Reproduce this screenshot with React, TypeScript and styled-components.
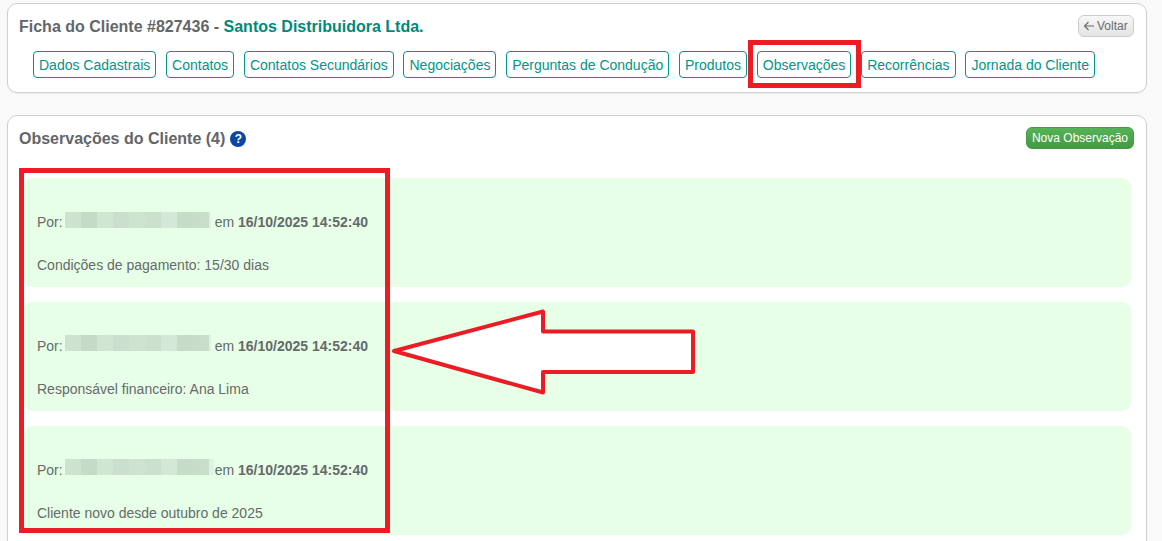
import React from "react";
import styled, { createGlobalStyle } from "styled-components";

const Global = createGlobalStyle`
  html, body { margin: 0; padding: 0; height: 541px; overflow: hidden; background: #f9f9f9; }
  body { font-family: "Liberation Sans", Arial, sans-serif; color: #666a6e; }
  #root { position: relative; }
`;

const Page = styled.div`
  position: relative;
  display: flex;
  flex-direction: column;
  gap: 22px;
  padding: 3px 15px 0 7px;
  height: 538px;
  overflow: hidden;
`;

const Card = styled.section`
  background: #fff;
  border: 1px solid #cfcfcf;
  border-radius: 10px;
  box-shadow: 0 1px 1px rgba(0, 0, 0, 0.04);
`;

const HeaderCard = styled(Card)`
  flex: none;
  padding: 11px 12px 0 11px;
  box-sizing: border-box;
  height: 90px;
`;

const ContentCard = styled(Card)`
  flex: 1;
  padding: 11px 12px 0 11px;
  box-sizing: border-box;
  min-height: 500px;
`;

const TitleRow = styled.div`
  display: flex;
  justify-content: space-between;
  align-items: flex-start;
  height: 25px;
`;

const Title = styled.h1`
  margin: 0;
  font-size: 16px;
  line-height: 24px;
  font-weight: 700;
  color: #636669;
`;

const ClientName = styled.span`
  color: #00897b;
`;

const BackButton = styled.button`
  display: flex;
  align-items: center;
  gap: 2px;
  box-sizing: border-box;
  height: 22px;
  width: 56px;
  padding: 0 0 0 4px;
  font: 12px "Liberation Sans", Arial, sans-serif;
  color: #6a6d70;
  background: linear-gradient(#f7f7f7, #e4e4e4);
  border: 1px solid #cccccc;
  border-radius: 6px;
`;

const Tabs = styled.nav`
  display: flex;
  gap: 9.8px;
  margin-top: 11px;
  padding-left: 14px;
`;

const Tab = styled.a`
  box-sizing: border-box;
  height: 27px;
  padding: 0 5px;
  font-size: 14px;
  line-height: 27px;
  color: #009688;
  background: #fff;
  border: 1px solid #009688;
  border-radius: 4px;
  white-space: nowrap;
`;

const SectionHeader = styled.div`
  display: flex;
  justify-content: space-between;
  align-items: flex-start;
  height: 51px;
`;

const SectionTitle = styled.h2`
  display: flex;
  align-items: center;
  gap: 5px;
  margin: 0;
  font-size: 16px;
  line-height: 24px;
  font-weight: 700;
  color: #636669;
`;

const HelpBadge = styled.span`
  display: inline-flex;
  width: 16px;
  height: 16px;
  align-items: center;
  justify-content: center;
  border-radius: 50%;
  background: #0d47a1;
  color: #fff;
  font-size: 12px;
  font-weight: 700;
`;

const NewButton = styled.button`
  box-sizing: border-box;
  height: 22px;
  padding: 0 5px;
  font: 12px "Liberation Sans", Arial, sans-serif;
  color: #fff;
  background: linear-gradient(#57b357, #439a43);
  border: 1px solid #439a43;
  border-radius: 6px;
`;

const NoteList = styled.div`
  display: flex;
  flex-direction: column;
  gap: 15px;
  margin: 0 3px 0 4px;
`;

const Note = styled.article`
  box-sizing: border-box;
  height: 109px;
  padding: 34px 14px 0;
  background: #e6ffe6;
  border-radius: 9px;
  font-size: 14px;
  color: #666a6e;
`;

const NoteMeta = styled.div`
  display: flex;
  align-items: center;
  height: 20px;
  white-space: pre;
`;

const NoteText = styled.p`
  margin: 23px 0 0;
  line-height: 20px;
`;

const Blur = styled.span<{ $width: number; $lift: number }>`
  display: inline-flex;
  flex: none;
  width: ${(p) => p.$width}px;
  height: 16px;
  margin: ${(p) => -4 - p.$lift * 2}px ${(p) => 150 - p.$width}px 0 2px;
  background: #e0f2e0;
  overflow: hidden;
`;

const BlurBlock = styled.i<{ $shade: string }>`
  flex: none;
  width: 16px;
  height: 16px;
  background: ${(p) => p.$shade};
`;

const FrameOverlay = styled.div`
  position: absolute;
  box-sizing: border-box;
  border: 5px solid #ed1c24;
  pointer-events: none;
`;

const TabFrame = styled(FrameOverlay)`
  left: 748px;
  top: 40px;
  width: 113px;
  height: 48px;
`;

const NotesFrame = styled(FrameOverlay)`
  left: 19px;
  top: 168px;
  width: 371px;
  height: 365px;
`;

const ArrowSvg = styled.svg`
  position: absolute;
  left: 380px;
  top: 300px;
`;

const shades = ["#cde2cf", "#c5dbc8", "#d0e5d2", "#ccdfce", "#cfe3d1", "#cbe0cd", "#d5e8d7", "#c7dbc9", "#c9ddcb"];

const tabs = [
  "Dados Cadastrais",
  "Contatos",
  "Contatos Secundários",
  "Negociações",
  "Perguntas de Condução",
  "Produtos",
  "Observações",
  "Recorrências",
  "Jornada do Cliente",
];

const notes = [
  { text: "Condições de pagamento: 15/30 dias", blur: 146, lift: 0 },
  { text: "Responsável financeiro: Ana Lima", blur: 146, lift: 1 },
  { text: "Cliente novo desde outubro de 2025", blur: 149, lift: 1 },
];

export default function App() {
  return (
    <>
      <Global />
      <Page>
        <HeaderCard>
          <TitleRow>
            <Title>
              Ficha do Cliente #827436 - <ClientName>Santos Distribuidora Ltda.</ClientName>
            </Title>
            <BackButton>
              <svg width="12" height="12" viewBox="0 0 12 12" fill="none" stroke="#6a6d70" strokeWidth="1.2">
                <path d="M11 6H1.5M5.5 2 1.5 6l4 4" />
              </svg>
              Voltar
            </BackButton>
          </TitleRow>
          <Tabs>
            {tabs.map((t) => (
              <Tab key={t}>{t}</Tab>
            ))}
          </Tabs>
        </HeaderCard>
        <ContentCard>
          <SectionHeader>
            <SectionTitle>
              Observações do Cliente (4) <HelpBadge>?</HelpBadge>
            </SectionTitle>
            <NewButton>Nova Observação</NewButton>
          </SectionHeader>
          <NoteList>
            {notes.map((n) => (
              <Note key={n.text}>
                <NoteMeta>
                  Por:
                  <Blur $width={n.blur} $lift={n.lift}>
                    {shades.map((s, i) => (
                      <BlurBlock key={i} $shade={s} />
                    ))}
                  </Blur>
                  em&nbsp;<b>16/10/2025 14:52:40</b>
                </NoteMeta>
                <NoteText>{n.text}</NoteText>
              </Note>
            ))}
          </NoteList>
        </ContentCard>
        <TabFrame />
        <NotesFrame />
        <ArrowSvg width="320" height="100" viewBox="380 300 320 100">
          <path
            d="M394 351 543 311.5V331.5H693V372H543V392.5Z"
            fill="#fff"
            stroke="#ed1c24"
            strokeWidth="4"
            strokeLinejoin="round"
          />
        </ArrowSvg>
      </Page>
    </>
  );
}
